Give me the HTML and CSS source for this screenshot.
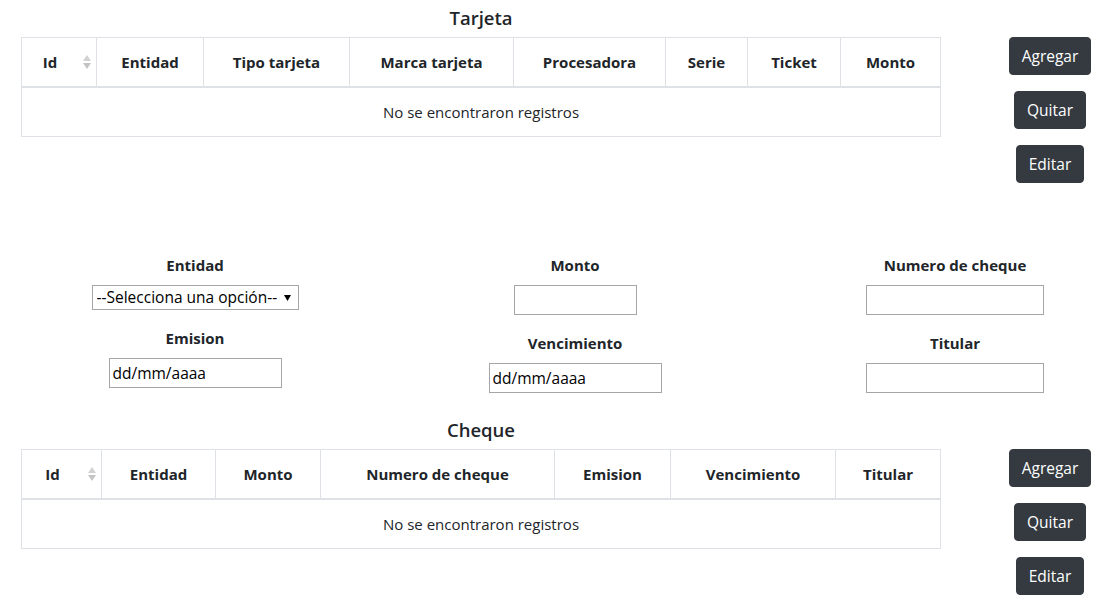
FILE: index.html
```html
<!DOCTYPE html>
<html lang="es">
<head>
<meta charset="utf-8">
<title>Pagos</title>
<link rel="stylesheet" href="styles.css">
</head>
<body>
<section class="block">
  <h5 class="block-title">Tarjeta</h5>
  <table class="data-table tarjeta">
    <thead>
      <tr>
        <th class="sortable">Id</th>
        <th>Entidad</th>
        <th>Tipo tarjeta</th>
        <th>Marca tarjeta</th>
        <th>Procesadora</th>
        <th>Serie</th>
        <th>Ticket</th>
        <th>Monto</th>
      </tr>
    </thead>
    <tbody>
      <tr><td colspan="8">No se encontraron registros</td></tr>
    </tbody>
  </table>
  <div class="actions">
    <button class="btn" type="button">Agregar</button>
    <button class="btn" type="button">Quitar</button>
    <button class="btn" type="button">Editar</button>
  </div>
</section>

<section class="form-grid">
  <div class="form-col">
    <div class="field">
      <label class="field-label">Entidad</label>
      <select class="field-select"><option>--Selecciona una opción--</option></select>
    </div>
    <div class="field">
      <label class="field-label">Emision</label>
      <input class="field-input w-date" type="text" value="dd/mm/aaaa">
    </div>
  </div>
  <div class="form-col">
    <div class="field">
      <label class="field-label">Monto</label>
      <input class="field-input w-small" type="text">
    </div>
    <div class="field">
      <label class="field-label">Vencimiento</label>
      <input class="field-input w-date" type="text" value="dd/mm/aaaa">
    </div>
  </div>
  <div class="form-col col-c">
    <div class="field">
      <label class="field-label">Numero de cheque</label>
      <input class="field-input w-wide" type="text">
    </div>
    <div class="field">
      <label class="field-label">Titular</label>
      <input class="field-input w-wide" type="text">
    </div>
  </div>
</section>

<section class="block block-cheque">
  <h5 class="block-title">Cheque</h5>
  <table class="data-table cheque">
    <thead>
      <tr>
        <th class="sortable">Id</th>
        <th>Entidad</th>
        <th>Monto</th>
        <th>Numero de cheque</th>
        <th>Emision</th>
        <th>Vencimiento</th>
        <th>Titular</th>
      </tr>
    </thead>
    <tbody>
      <tr><td colspan="7">No se encontraron registros</td></tr>
    </tbody>
  </table>
  <div class="actions">
    <button class="btn" type="button">Agregar</button>
    <button class="btn" type="button">Quitar</button>
    <button class="btn" type="button">Editar</button>
  </div>
</section>
</body>
</html>
```
FILE: styles.css
```css
* { box-sizing: border-box; }

html, body {
  margin: 0;
  padding: 0;
  background: #fff;
}

body {
  font-family: "Open Sans", "Noto Sans", "Liberation Sans", sans-serif;
  font-size: 15px;
  line-height: 1.5;
  color: #212529;
  padding-top: 6px;
  overflow: hidden;
}

.block {
  display: grid;
  grid-template-columns: 920px 1fr;
  grid-template-rows: auto auto;
  margin-left: 21px;
}

.block-cheque {
  margin-top: 25px;
}

.block-title {
  grid-column: 1;
  grid-row: 1;
  margin: 0 0 7px;
  font-size: 18.5px;
  font-weight: 600;
  line-height: 24px;
  text-align: center;
  color: #212529;
}

.data-table {
  grid-column: 1;
  grid-row: 2;
  align-self: start;
  width: 919px;
  border-collapse: collapse;
  table-layout: fixed;
}

.data-table th,
.data-table td {
  border: 1px solid #dee2e6;
  padding: 12px;
  text-align: center;
  vertical-align: middle;
  line-height: 24px;
}

.data-table th {
  font-weight: 700;
  border-bottom: 2px solid #dee2e6;
  white-space: nowrap;
}

.data-table td {
  font-weight: 400;
}

.data-table th.sortable {
  padding-right: 30px;
  background-image: url("data:image/svg+xml,%3Csvg xmlns='http://www.w3.org/2000/svg' width='8' height='14' viewBox='0 0 8 14'%3E%3Cpolygon points='0,6 4,0 8,6' fill='%23d2d2d2'/%3E%3Cpolygon points='0,8 8,8 4,14' fill='%23c4c4c4'/%3E%3C/svg%3E");
  background-repeat: no-repeat;
  background-position: right 5px center;
}

.tarjeta th:nth-child(1) { width: 75px; }
.tarjeta th:nth-child(2) { width: 107px; }
.tarjeta th:nth-child(3) { width: 146px; }
.tarjeta th:nth-child(4) { width: 164px; }
.tarjeta th:nth-child(5) { width: 152px; }
.tarjeta th:nth-child(6) { width: 82px; }
.tarjeta th:nth-child(7) { width: 93px; }
.tarjeta th:nth-child(8) { width: 100px; }

.cheque th:nth-child(1) { width: 80px; }
.cheque th:nth-child(2) { width: 114px; }
.cheque th:nth-child(3) { width: 105px; }
.cheque th:nth-child(4) { width: 234px; }
.cheque th:nth-child(5) { width: 116px; }
.cheque th:nth-child(6) { width: 165px; }
.cheque th:nth-child(7) { width: 105px; }

.actions {
  grid-column: 2;
  grid-row: 2;
  display: flex;
  flex-direction: column;
  align-items: center;
  gap: 16px;
  padding-left: 49px;
}

.btn {
  font-family: inherit;
  font-size: 15.5px;
  line-height: 24px;
  padding: 6px 12px;
  border: 1px solid #343a40;
  border-radius: 4px;
  background: #343a40;
  color: #fff;
  cursor: pointer;
}

.form-grid {
  display: grid;
  grid-template-columns: 380px 380px 345px;
  margin-top: 70px;
  padding-left: 5px;
}

.col-c {
  margin-left: 35px;
}

.form-col {
  display: flex;
  flex-direction: column;
  align-items: center;
}

.field {
  display: flex;
  flex-direction: column;
  align-items: center;
}

.field + .field {
  margin-top: 16px;
}

.field-label {
  display: block;
  font-weight: 700;
  line-height: 24px;
  margin-bottom: 8px;
}

.field-input {
  height: 30px;
  border: 1px solid #a6a6a6;
  padding: 0 3px;
  font-family: inherit;
  font-size: 15.5px;
  color: #000;
  background: #fff;
}

.w-date { width: 173px; }
.w-small { width: 123px; }
.w-wide { width: 178px; }

.field-select {
  appearance: none;
  -webkit-appearance: none;
  width: 207px;
  height: 25px;
  border: 1px solid #a6a6a6;
  border-radius: 0;
  padding: 0 0 0 4px;
  font-family: inherit;
  font-size: 15.5px;
  line-height: 21px;
  color: #000;
  background-color: #fff;
  background-image: url("data:image/svg+xml,%3Csvg xmlns='http://www.w3.org/2000/svg' width='7' height='6' viewBox='0 0 7 6'%3E%3Cpolygon points='0,0 7,0 3.5,6' fill='%23000'/%3E%3C/svg%3E");
  background-repeat: no-repeat;
  background-position: right 7px center;
}
```
